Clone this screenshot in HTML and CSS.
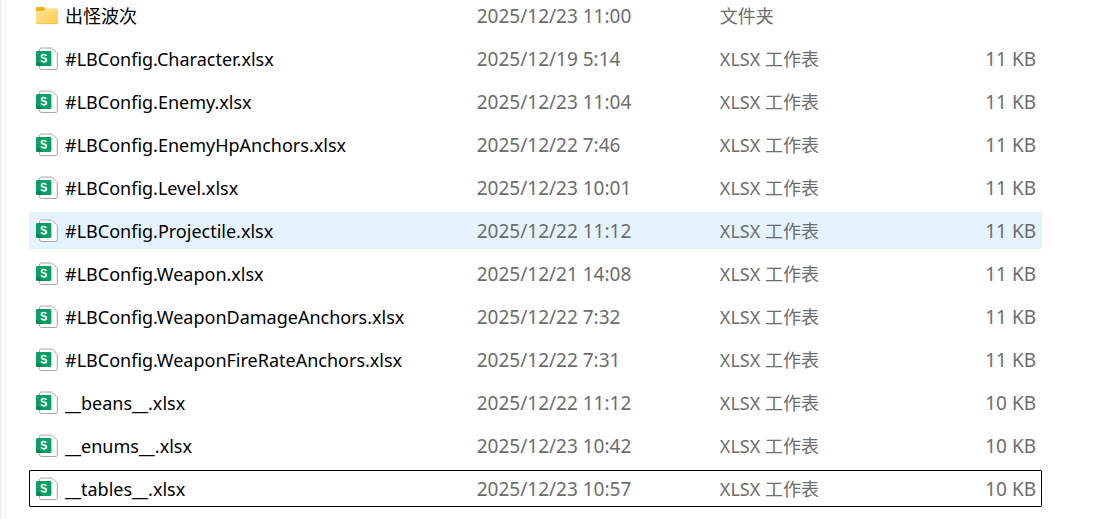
FILE: index.html
```
<!DOCTYPE html>
<html lang="zh-CN">
<head>
    <meta charset="UTF-8">
    <title>Files</title>
    <link rel="stylesheet" href="styles.css">
</head>
<body>
<svg class="defs" width="0" height="0">
    <defs>
        <linearGradient id="folderFill" x1="0" y1="0" x2="1" y2="1">
            <stop offset="0" stop-color="#ffe49a"/>
            <stop offset="1" stop-color="#ffcc4d"/>
        </linearGradient>
        <symbol id="folder" viewBox="0 0 22 24">
            <path d="M0 4.2Q0 3 1.2 3H7.8L9.6 4.6V9H0z" fill="#f5b01e"/>
            <path d="M0 7H7.4L9.6 4.4H20.8Q22 4.4 22 5.6V18.6Q22 20 20.8 20H1.2Q0 20 0 18.6z" fill="url(#folderFill)"/>
            <path d="M0.4 19.6H21.6" stroke="#f3bd45" stroke-width="0.8"/>
        </symbol>
        <symbol id="sheet" viewBox="0 0 22 24">
            <path d="M3.5 3Q3.5 1 5.5 1H16.2L21.3 6.2V20.9Q21.3 22.5 19.7 22.5H5.5Q3.5 22.5 3.5 20.5z" fill="#fff" stroke="#a6a6a6"/>
            <path d="M16.4 1.4V4.4Q16.4 6 18 6H21" fill="none" stroke="#eaeaea" stroke-width="0.8"/>
            <rect x="0" y="4" width="15.4" height="15" rx="1.4" fill="#0a9f63"/>
            <path d="M0 17.6Q0 19 1.4 19H7.6L3.4 15.5H0z" fill="#078853"/>
            <path d="M10.2 8.8Q9.6 7.5 7.8 7.5Q5.5 7.5 5.5 9.3Q5.5 10.7 7.8 11.1Q10.4 11.5 10.4 13.1Q10.4 14.9 7.9 14.9Q5.8 14.9 5.2 13.3" fill="none" stroke="#fff" stroke-width="1.7"/>
        </symbol>
    </defs>
</svg>
<div id="box">
    <table class="files">
        <colgroup>
            <col class="c-name">
            <col class="c-date">
            <col class="c-type">
            <col>
        </colgroup>
        <tbody>
        <tr><td class="name"><div><svg class="icon"><use href="#folder"/></svg><span>出怪波次</span></div></td><td class="date">2025/12/23 11:00</td><td>文件夹</td><td class="size"></td></tr>
        <tr><td class="name"><div><svg class="icon"><use href="#sheet"/></svg><span>#LBConfig.Character.xlsx</span></div></td><td class="date">2025/12/19 5:14</td><td>XLSX 工作表</td><td class="size">11 KB</td></tr>
        <tr><td class="name"><div><svg class="icon"><use href="#sheet"/></svg><span>#LBConfig.Enemy.xlsx</span></div></td><td class="date">2025/12/23 11:04</td><td>XLSX 工作表</td><td class="size">11 KB</td></tr>
        <tr><td class="name"><div><svg class="icon"><use href="#sheet"/></svg><span>#LBConfig.EnemyHpAnchors.xlsx</span></div></td><td class="date">2025/12/22 7:46</td><td>XLSX 工作表</td><td class="size">11 KB</td></tr>
        <tr><td class="name"><div><svg class="icon"><use href="#sheet"/></svg><span>#LBConfig.Level.xlsx</span></div></td><td class="date">2025/12/23 10:01</td><td>XLSX 工作表</td><td class="size">11 KB</td></tr>
        <tr class="hover"><td class="name"><div><svg class="icon"><use href="#sheet"/></svg><span>#LBConfig.Projectile.xlsx</span></div></td><td class="date">2025/12/22 11:12</td><td>XLSX 工作表</td><td class="size">11 KB</td></tr>
        <tr><td class="name"><div><svg class="icon"><use href="#sheet"/></svg><span>#LBConfig.Weapon.xlsx</span></div></td><td class="date">2025/12/21 14:08</td><td>XLSX 工作表</td><td class="size">11 KB</td></tr>
        <tr><td class="name"><div><svg class="icon"><use href="#sheet"/></svg><span>#LBConfig.WeaponDamageAnchors.xlsx</span></div></td><td class="date">2025/12/22 7:32</td><td>XLSX 工作表</td><td class="size">11 KB</td></tr>
        <tr><td class="name"><div><svg class="icon"><use href="#sheet"/></svg><span>#LBConfig.WeaponFireRateAnchors.xlsx</span></div></td><td class="date">2025/12/22 7:31</td><td>XLSX 工作表</td><td class="size">11 KB</td></tr>
        <tr><td class="name"><div><svg class="icon"><use href="#sheet"/></svg><span>__beans__.xlsx</span></div></td><td class="date">2025/12/22 11:12</td><td>XLSX 工作表</td><td class="size">10 KB</td></tr>
        <tr><td class="name"><div><svg class="icon"><use href="#sheet"/></svg><span>__enums__.xlsx</span></div></td><td class="date">2025/12/23 10:42</td><td>XLSX 工作表</td><td class="size">10 KB</td></tr>
        <tr class="focus"><td class="name"><div><svg class="icon"><use href="#sheet"/></svg><span>__tables__.xlsx</span></div></td><td class="date">2025/12/23 10:57</td><td>XLSX 工作表</td><td class="size">10 KB</td></tr>
        </tbody>
    </table>
</div>
</body>
</html>
```
FILE: styles.css
```
*{ margin:0; padding:0; box-sizing:border-box;}
body{
    background: #fff;
    font-family: "Noto Sans","Noto Sans CJK SC",sans-serif;
    font-size: 18px;
    line-height: 24px;
    color: #6d6d6d;
    overflow: hidden;
}
.defs{
    position: absolute;
}
#box{
    display: flow-root;
    min-height: 100vh;
    padding: 0 77px 0 27px;
    border-left: 2px solid #f0f0f0;
    background: linear-gradient(#f7f7f7,#f7f7f7) 2px 0 / 2px 100% no-repeat;
}
/* the list is scrolled, the first row is cut at the top */
.files{
    width: 100%;
    margin-top: -9px;
    table-layout: fixed;
    border-collapse: separate;
    border-spacing: 0 6px;
}
.c-name{ width: 44%;}
.c-date{ width: 24%;}
.c-type{ width: 20%;}
.files td{
    height: 37px;
    padding-left: 2px;
    border: 0 solid transparent;
    border-width: 1px 0;
    text-align: left;
    vertical-align: middle;
    white-space: nowrap;
}
.files td:first-child{
    border-left-width: 1px;
    border-radius: 2px 0 0 2px;
}
.files td:last-child{
    border-right-width: 1px;
    border-radius: 0 2px 2px 0;
}
.files .name{
    padding-left: 6px;
    color: #000;
}
.name div{
    display: flex;
    align-items: center;
    gap: 7px;
}
.icon{
    flex: none;
    width: 22px;
    height: 24px;
}
.files .date,
.files .size{
    font-size: 19px;
}
.files .size{
    padding-right: 5px;
    text-align: right;
}
.hover td{
    background: #e5f3ff;
}
.focus td{
    border-color: #000;
}
```
